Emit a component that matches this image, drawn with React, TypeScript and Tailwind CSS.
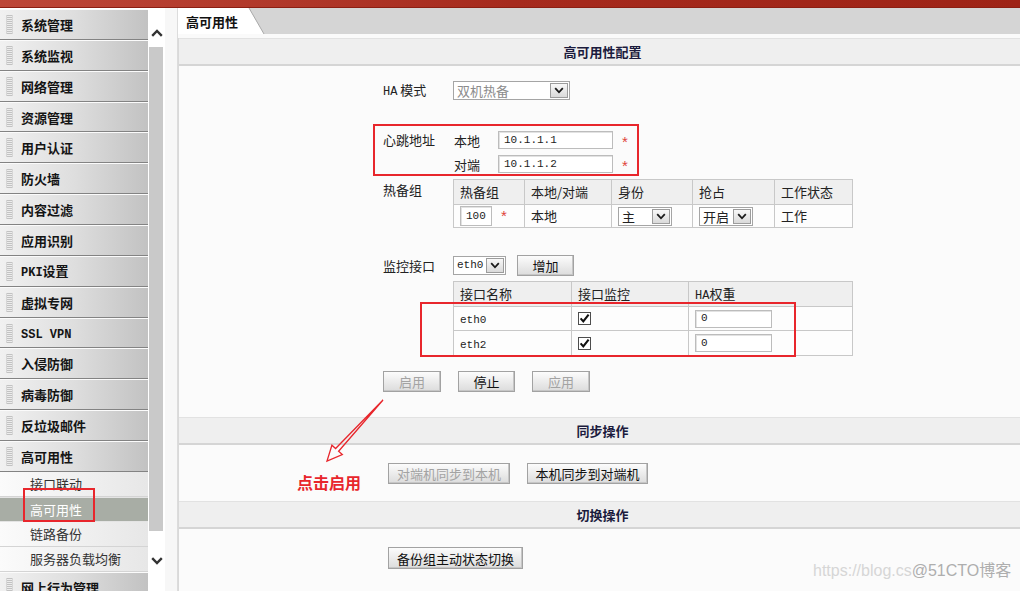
import React from "react";

const MONO = "font-['Liberation_Mono',monospace]";

function Grip() {
  return (
    <div className="w-[7px] h-[19px] border-x border-[#d6d6d6] bg-[repeating-linear-gradient(0deg,#c2c2c2_0px,#c2c2c2_1px,#ececec_1px,#ececec_2px)]" />
  );
}

function NavItem({ children }: { children: React.ReactNode }) {
  return (
    <div className="h-[30.86px] shrink-0 flex items-center bg-linear-to-r from-[#f1f1f1] via-[#dedede] to-[#c2c2c2] border-t border-t-[#fbfbfb] border-b border-b-[#838383]">
      <div className="ml-[6px]">
        <Grip />
      </div>
      <span className="ml-[8px] text-[13px] font-bold text-[#141414] leading-none whitespace-nowrap">{children}</span>
    </div>
  );
}

function SubItem({ children, active }: { children: React.ReactNode; active?: boolean }) {
  return (
    <div
      className={
        active
          ? "h-[25px] shrink-0 flex items-center bg-[#a8ada5] border-y border-[#e4e4e4] text-white"
          : "h-[25px] shrink-0 flex items-center bg-linear-to-r from-[#fbfbfb] to-[#e7e7e7] border-b border-[#d4d4d4] text-[#333]"
      }
    >
      <span className="ml-[30px] text-[13px] leading-none whitespace-nowrap">{children}</span>
    </div>
  );
}

function ChevUp() {
  return (
    <svg width="12" height="8" viewBox="0 0 12 8">
      <path d="M1.2 6.8 L6 2 L10.8 6.8" stroke="#333" strokeWidth="2.4" fill="none" />
    </svg>
  );
}

function ChevDown() {
  return (
    <svg width="12" height="8" viewBox="0 0 12 8">
      <path d="M1.2 1.2 L6 6 L10.8 1.2" stroke="#333" strokeWidth="2.4" fill="none" />
    </svg>
  );
}

function SmallChev() {
  return (
    <svg width="10" height="7" viewBox="0 0 10 7">
      <path d="M1.2 1.2 L5 5.3 L8.8 1.2" stroke="#1a1a1a" strokeWidth="1.8" fill="none" />
    </svg>
  );
}

function Sel({ children, className }: { children: React.ReactNode; className: string }) {
  return (
    <div className={`flex h-[19px] bg-white border border-[#a5a5a5] ${className}`}>
      <div className="flex-1 flex items-center pl-[3px] overflow-hidden whitespace-nowrap">{children}</div>
      <div className="w-[18px] border border-[#9c9c9c] m-[1px] bg-linear-to-b from-[#f8f8f8] to-[#dadada] flex items-center justify-center">
        <SmallChev />
      </div>
    </div>
  );
}

function TextInput({ value, className }: { value: string; className: string }) {
  return (
    <div className={`bg-white border border-[#bcbcbc] shadow-[inset_1px_1px_0_#e2e2e2] flex items-center pl-[5px] ${className}`}>
      <span className={`${MONO} text-[11px] text-[#222] leading-none`}>{value}</span>
    </div>
  );
}

function Btn({ children, className, disabled }: { children: React.ReactNode; className: string; disabled?: boolean }) {
  return (
    <div
      className={`border border-[#a2a2a2] bg-linear-to-b from-[#fcfcfc] to-[#dcdcdc] shadow-[inset_-1px_-1px_0_#c6c6c6] text-[13px] leading-none flex items-center justify-center whitespace-nowrap ${
        disabled ? "text-[#a3a3a3]" : "text-[#111]"
      } ${className}`}
    >
      {children}
    </div>
  );
}

function Check() {
  return (
    <div className="w-[13px] h-[13px] border border-[#4d4d4d] bg-white flex items-center justify-center">
      <svg width="11" height="11" viewBox="0 0 11 11">
        <path d="M1.6 5.4 L4.3 8.4 L9.6 1.6" stroke="#111" strokeWidth="2.1" fill="none" />
      </svg>
    </div>
  );
}

function Star() {
  return <span className="font-['Liberation_Sans',sans-serif] text-[15px] text-[#e0433a] leading-none">*</span>;
}

function SectionHeader({ children, className }: { children: React.ReactNode; className: string }) {
  return (
    <div className={`shrink-0 bg-[#efefef] border-t border-t-[#e2e2e2] border-b-2 border-b-[#d5d5d5] flex items-center justify-center pl-[6px] ${className}`}>
      <span className="text-[13px] font-bold text-[#1b1b3d] leading-none">{children}</span>
    </div>
  );
}

const TD = "border border-[#c8c8c8] text-left font-normal pl-[6px] text-[13px] text-[#222]";

export default function App() {
  return (
    <div className="relative w-[1020px] h-[591px] overflow-hidden bg-white font-['Noto_Sans_CJK_SC',sans-serif] text-[#222]">
      <div className="h-[8px] bg-linear-to-r from-[#bd4738] via-[#a62a1d] to-[#9e2316] border-b border-[#8c1e12]" />
      <div className="flex h-[583px]">
        <aside className="w-[148px] shrink-0 flex flex-col pt-[1px] overflow-hidden bg-white">
          <NavItem>系统管理</NavItem>
          <NavItem>系统监视</NavItem>
          <NavItem>网络管理</NavItem>
          <NavItem>资源管理</NavItem>
          <NavItem>用户认证</NavItem>
          <NavItem>防火墙</NavItem>
          <NavItem>内容过滤</NavItem>
          <NavItem>应用识别</NavItem>
          <NavItem>
            <span className={`${MONO} text-[12px]`}>PKI</span>设置
          </NavItem>
          <NavItem>虚拟专网</NavItem>
          <NavItem>
            <span className={`${MONO} text-[12px]`}>SSL VPN</span>
          </NavItem>
          <NavItem>入侵防御</NavItem>
          <NavItem>病毒防御</NavItem>
          <NavItem>反垃圾邮件</NavItem>
          <NavItem>高可用性</NavItem>
          <SubItem>接口联动</SubItem>
          <SubItem active>高可用性</SubItem>
          <SubItem>链路备份</SubItem>
          <SubItem>服务器负载均衡</SubItem>
          <NavItem>网上行为管理</NavItem>
        </aside>

        <div className="w-[17px] shrink-0 flex flex-col pt-[1px] bg-white">
          <div className="h-[38px] flex items-end justify-center pb-[10px]">
            <ChevUp />
          </div>
          <div className="h-[486px] ml-[1px] mr-[2px] bg-[#c9c9c9]" />
          <div className="h-[60px] flex items-center justify-center">
            <ChevDown />
          </div>
        </div>

        <div className="w-[13px] shrink-0 bg-[#f7f7f7] border-r border-[#dcdcdc]" />

        <main className="flex-1 min-w-0 flex flex-col">
          <div className="relative h-[26px] shrink-0 bg-[#d5d5d5] flex">
            <div className="h-[26px] w-[86px] bg-white [clip-path:polygon(0_0,71px_0,86px_100%,0_100%)] flex items-center pl-[8px]">
              <span className="text-[13px] font-bold text-[#111] leading-none">高可用性</span>
            </div>
            <svg className="absolute left-[70px] top-0" width="17" height="26" viewBox="0 0 17 26">
              <path d="M1 0 L16 26" stroke="#a9a9a9" strokeWidth="1" fill="none" />
            </svg>
          </div>
          <div className="h-[4px] shrink-0 bg-[#fafafa]" />

          <div className="flex-1 bg-[#fbfbfb] border-l border-[#d9d9d9] flex flex-col">
            <SectionHeader className="h-[28px]">高可用性配置</SectionHeader>

            <div className="pl-[204px] pt-[15px] flex flex-col">
              <div className="flex items-center h-[19px]">
                <div className="w-[70px] text-[13px] leading-none">
                  <span className={`${MONO} text-[12px]`}>HA</span> 模式
                </div>
                <Sel className="w-[117px]">
                  <span className="text-[13px] text-[#8c8c8c] leading-none">双机热备</span>
                </Sel>
              </div>

              <div className="mt-[31px] flex">
                <div className="w-[71px] text-[13px] leading-[18px]">心跳地址</div>
                <div className="flex flex-col gap-[6px]">
                  <div className="flex items-center h-[18px]">
                    <span className="w-[44px] text-[13px] leading-none">本地</span>
                    <TextInput value="10.1.1.1" className="w-[115px] h-[18px]" />
                    <span className="ml-[9px]">
                      <Star />
                    </span>
                  </div>
                  <div className="flex items-center h-[18px]">
                    <span className="w-[44px] text-[13px] leading-none">对端</span>
                    <TextInput value="10.1.1.2" className="w-[115px] h-[18px]" />
                    <span className="ml-[9px]">
                      <Star />
                    </span>
                  </div>
                </div>
              </div>

              <div className="mt-[6px] flex">
                <div className="w-[70px] pt-[2px] text-[13px] leading-[18px]">热备组</div>
                <table className="w-[399px] table-fixed border-collapse">
                  <colgroup>
                    <col className="w-[71px]" />
                    <col className="w-[87px]" />
                    <col className="w-[81px]" />
                    <col className="w-[82px]" />
                    <col className="w-[78px]" />
                  </colgroup>
                  <thead>
                    <tr className="h-[25px] bg-[#efefef]">
                      <th className={TD}>热备组</th>
                      <th className={TD}>本地/对端</th>
                      <th className={TD}>身份</th>
                      <th className={TD}>抢占</th>
                      <th className={TD}>工作状态</th>
                    </tr>
                  </thead>
                  <tbody>
                    <tr className="h-[23px] bg-[#fdfdfd]">
                      <td className={TD}>
                        <div className="flex items-center">
                          <TextInput value="100" className="w-[32px] h-[20px]" />
                          <span className="ml-[9px]">
                            <Star />
                          </span>
                        </div>
                      </td>
                      <td className={TD}>本地</td>
                      <td className={TD}>
                        <Sel className="w-[54px]">
                          <span className="text-[13px] leading-none">主</span>
                        </Sel>
                      </td>
                      <td className={TD}>
                        <Sel className="w-[54px]">
                          <span className="text-[13px] leading-none">开启</span>
                        </Sel>
                      </td>
                      <td className={TD}>工作</td>
                    </tr>
                  </tbody>
                </table>
              </div>

              <div className="mt-[27px] flex items-center h-[21px]">
                <div className="w-[70px] text-[13px] leading-none">监控接口</div>
                <Sel className="w-[53px]">
                  <span className={`${MONO} text-[11px] leading-none`}>eth0</span>
                </Sel>
                <Btn className="ml-[11px] w-[57px] h-[21px]">增加</Btn>
              </div>

              <div className="mt-[5px] ml-[70px]">
                <table className="w-[399px] table-fixed border-collapse">
                  <colgroup>
                    <col className="w-[118px]" />
                    <col className="w-[117px]" />
                    <col className="w-[164px]" />
                  </colgroup>
                  <thead>
                    <tr className="h-[25px] bg-[#efefef]">
                      <th className={TD}>接口名称</th>
                      <th className={TD}>接口监控</th>
                      <th className={TD}>
                        <span className={`${MONO} text-[12px]`}>HA</span>权重
                      </th>
                    </tr>
                  </thead>
                  <tbody>
                    {["eth0", "eth2"].map((n, i) => (
                      <tr key={n} className={i === 0 ? "h-[24px] bg-[#fdfdfd]" : "h-[25px] bg-[#fdfdfd]"}>
                        <td className={TD}>
                          <span className={`${MONO} text-[11px]`}>{n}</span>
                        </td>
                        <td className={TD}>
                          <Check />
                        </td>
                        <td className={TD}>
                          <TextInput value="0" className="w-[77px] h-[18px]" />
                        </td>
                      </tr>
                    ))}
                  </tbody>
                </table>
              </div>

              <div className="mt-[15px] flex gap-[17px]">
                <Btn disabled className="w-[58px] h-[21px]">启用</Btn>
                <Btn className="w-[57px] h-[21px]">停止</Btn>
                <Btn disabled className="w-[58px] h-[21px]">应用</Btn>
              </div>
            </div>

            <SectionHeader className="mt-[25px] h-[28px]">同步操作</SectionHeader>
            <div className="pl-[209px] pt-[18px] pb-[17px] flex gap-[17px]">
              <Btn disabled className="w-[122px] h-[21px]">对端机同步到本机</Btn>
              <Btn className="w-[121px] h-[21px]">本机同步到对端机</Btn>
            </div>

            <SectionHeader className="h-[28px]">切换操作</SectionHeader>
            <div className="pl-[209px] pt-[18px] flex">
              <Btn className="w-[135px] h-[22px]">备份组主动状态切换</Btn>
            </div>
          </div>
        </main>
      </div>

      {/* annotations */}
      <div className="absolute left-[23px] top-[488px] w-[72px] h-[34px] border-2 border-[#e8262c]" />
      <div className="absolute left-[373px] top-[124px] w-[266px] h-[52px] border-2 border-[#e8262c]" />
      <div className="absolute left-[420px] top-[302px] w-[376px] h-[55px] border-2 border-[#e8262c]" />
      <svg className="absolute left-[320px] top-[395px]" width="70" height="70" viewBox="320 395 70 70">
        <polygon
          points="383,400 338.6,451.3 342.3,454.6 327,461 331.9,445.2 335.6,448.5"
          stroke="#e8262c"
          strokeWidth="1.3"
          fill="none"
          strokeLinejoin="miter"
        />
      </svg>
      <div className="absolute left-[297px] top-[474px] text-[16px] font-bold text-[#e8262c] leading-none">点击启用</div>
      <div className="absolute left-[813px] top-[563px] text-[16px] leading-none whitespace-nowrap font-['Liberation_Sans','Noto_Sans_CJK_SC',sans-serif]">
        <span className="text-[#d6d6d6]">https://blog.cs</span>
        <span className="text-[#aeaeae]">@51CTO博客</span>
      </div>
    </div>
  );
}
